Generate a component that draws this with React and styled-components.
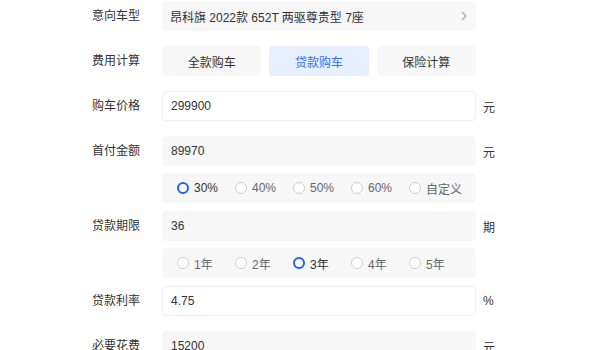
import React, { useState } from 'react';
import styled, { createGlobalStyle, css } from 'styled-components';

const GlobalStyle = createGlobalStyle`
  html, body {
    margin: 0;
    padding: 0;
    background: #fff;
  }
  body {
    font-family: "Liberation Sans", "Noto Sans CJK SC", sans-serif;
    font-size: 12px;
    color: #333;
  }
`;

const Form = styled.div`
  width: 600px;
  padding-top: 1px;
`;

const Row = styled.div`
  display: flex;
  align-items: center;
  margin-bottom: ${props => (props.$tight ? '7px' : '15px')};
`;

const SubRow = styled.div`
  display: flex;
  margin-bottom: 8px;
  padding-left: 162px;
`;

const Label = styled.div`
  width: 140px;
  padding-right: 22px;
  text-align: right;
  line-height: 30px;
  flex-shrink: 0;
`;

const boxBase = css`
  box-sizing: border-box;
  width: 314px;
  height: 30px;
  border-radius: 4px;
  display: flex;
  align-items: center;
`;

const Select = styled.div`
  ${boxBase}
  background: #f7f7f8;
  padding: 0 9px 0 8px;
  justify-content: space-between;
  cursor: pointer;
`;

const Input = styled.div`
  ${boxBase}
  padding: 0 8px;
  background: ${props => (props.$filled ? '#f7f7f8' : '#fff')};
  border: 1px solid ${props => (props.$filled ? '#f7f7f8' : '#efefef')};
`;

const Unit = styled.span`
  margin-left: 7px;
`;

const Tabs = styled.div`
  display: grid;
  grid-template-columns: repeat(3, 1fr);
  gap: 8px;
  width: 314px;
`;

const Tab = styled.div`
  height: 30px;
  border-radius: 4px;
  display: flex;
  align-items: center;
  justify-content: center;
  background: ${props => (props.$active ? '#e7effd' : '#f7f7f8')};
  color: ${props => (props.$active ? '#3b6de0' : '#333')};
  cursor: pointer;
`;

const Options = styled.div`
  ${boxBase}
  background: #f7f7f8;
  padding-left: 15px;
`;

const Option = styled.label`
  width: 58px;
  display: flex;
  align-items: center;
  color: ${props => (props.$checked ? '#333' : '#666')};
  cursor: pointer;
  flex-shrink: 0;
`;

const Dot = styled.span`
  box-sizing: border-box;
  width: 12px;
  height: 12px;
  border-radius: 50%;
  margin-right: 5px;
  background: #fff;
  border: ${props => (props.$checked ? '2.5px solid #1f66e5' : '1px solid #cfcfcf')};
`;

const Chevron = () => (
  <svg width="6" height="10" viewBox="0 0 6 10">
    <path d="M1 1l4 4-4 4" fill="none" stroke="#aaa" strokeWidth="1.1" />
  </svg>
);

const RadioGroup = ({ items, value, onChange }) => (
  <Options>
    {items.map(item => (
      <Option key={item} $checked={item === value} onClick={() => onChange(item)}>
        <Dot $checked={item === value} />
        {item}
      </Option>
    ))}
  </Options>
);

export default function App() {
  const [tab, setTab] = useState('贷款购车');
  const [ratio, setRatio] = useState('30%');
  const [term, setTerm] = useState('3年');

  return (
    <Form>
      <GlobalStyle />
      <Row>
        <Label>意向车型</Label>
        <Select>
          <span>昂科旗 2022款 652T 两驱尊贵型 7座</span>
          <Chevron />
        </Select>
      </Row>
      <Row>
        <Label>费用计算</Label>
        <Tabs>
          {['全款购车', '贷款购车', '保险计算'].map(t => (
            <Tab key={t} $active={t === tab} onClick={() => setTab(t)}>{t}</Tab>
          ))}
        </Tabs>
      </Row>
      <Row>
        <Label>购车价格</Label>
        <Input>299900</Input>
        <Unit>元</Unit>
      </Row>
      <Row $tight>
        <Label>首付金额</Label>
        <Input $filled>89970</Input>
        <Unit>元</Unit>
      </Row>
      <SubRow>
        <RadioGroup items={['30%', '40%', '50%', '60%', '自定义']} value={ratio} onChange={setRatio} />
      </SubRow>
      <Row $tight>
        <Label>贷款期限</Label>
        <Input $filled>36</Input>
        <Unit>期</Unit>
      </Row>
      <SubRow>
        <RadioGroup items={['1年', '2年', '3年', '4年', '5年']} value={term} onChange={setTerm} />
      </SubRow>
      <Row>
        <Label>贷款利率</Label>
        <Input>4.75</Input>
        <Unit>%</Unit>
      </Row>
      <Row>
        <Label>必要花费</Label>
        <Input $filled>15200</Input>
        <Unit>元</Unit>
      </Row>
    </Form>
  );
}
